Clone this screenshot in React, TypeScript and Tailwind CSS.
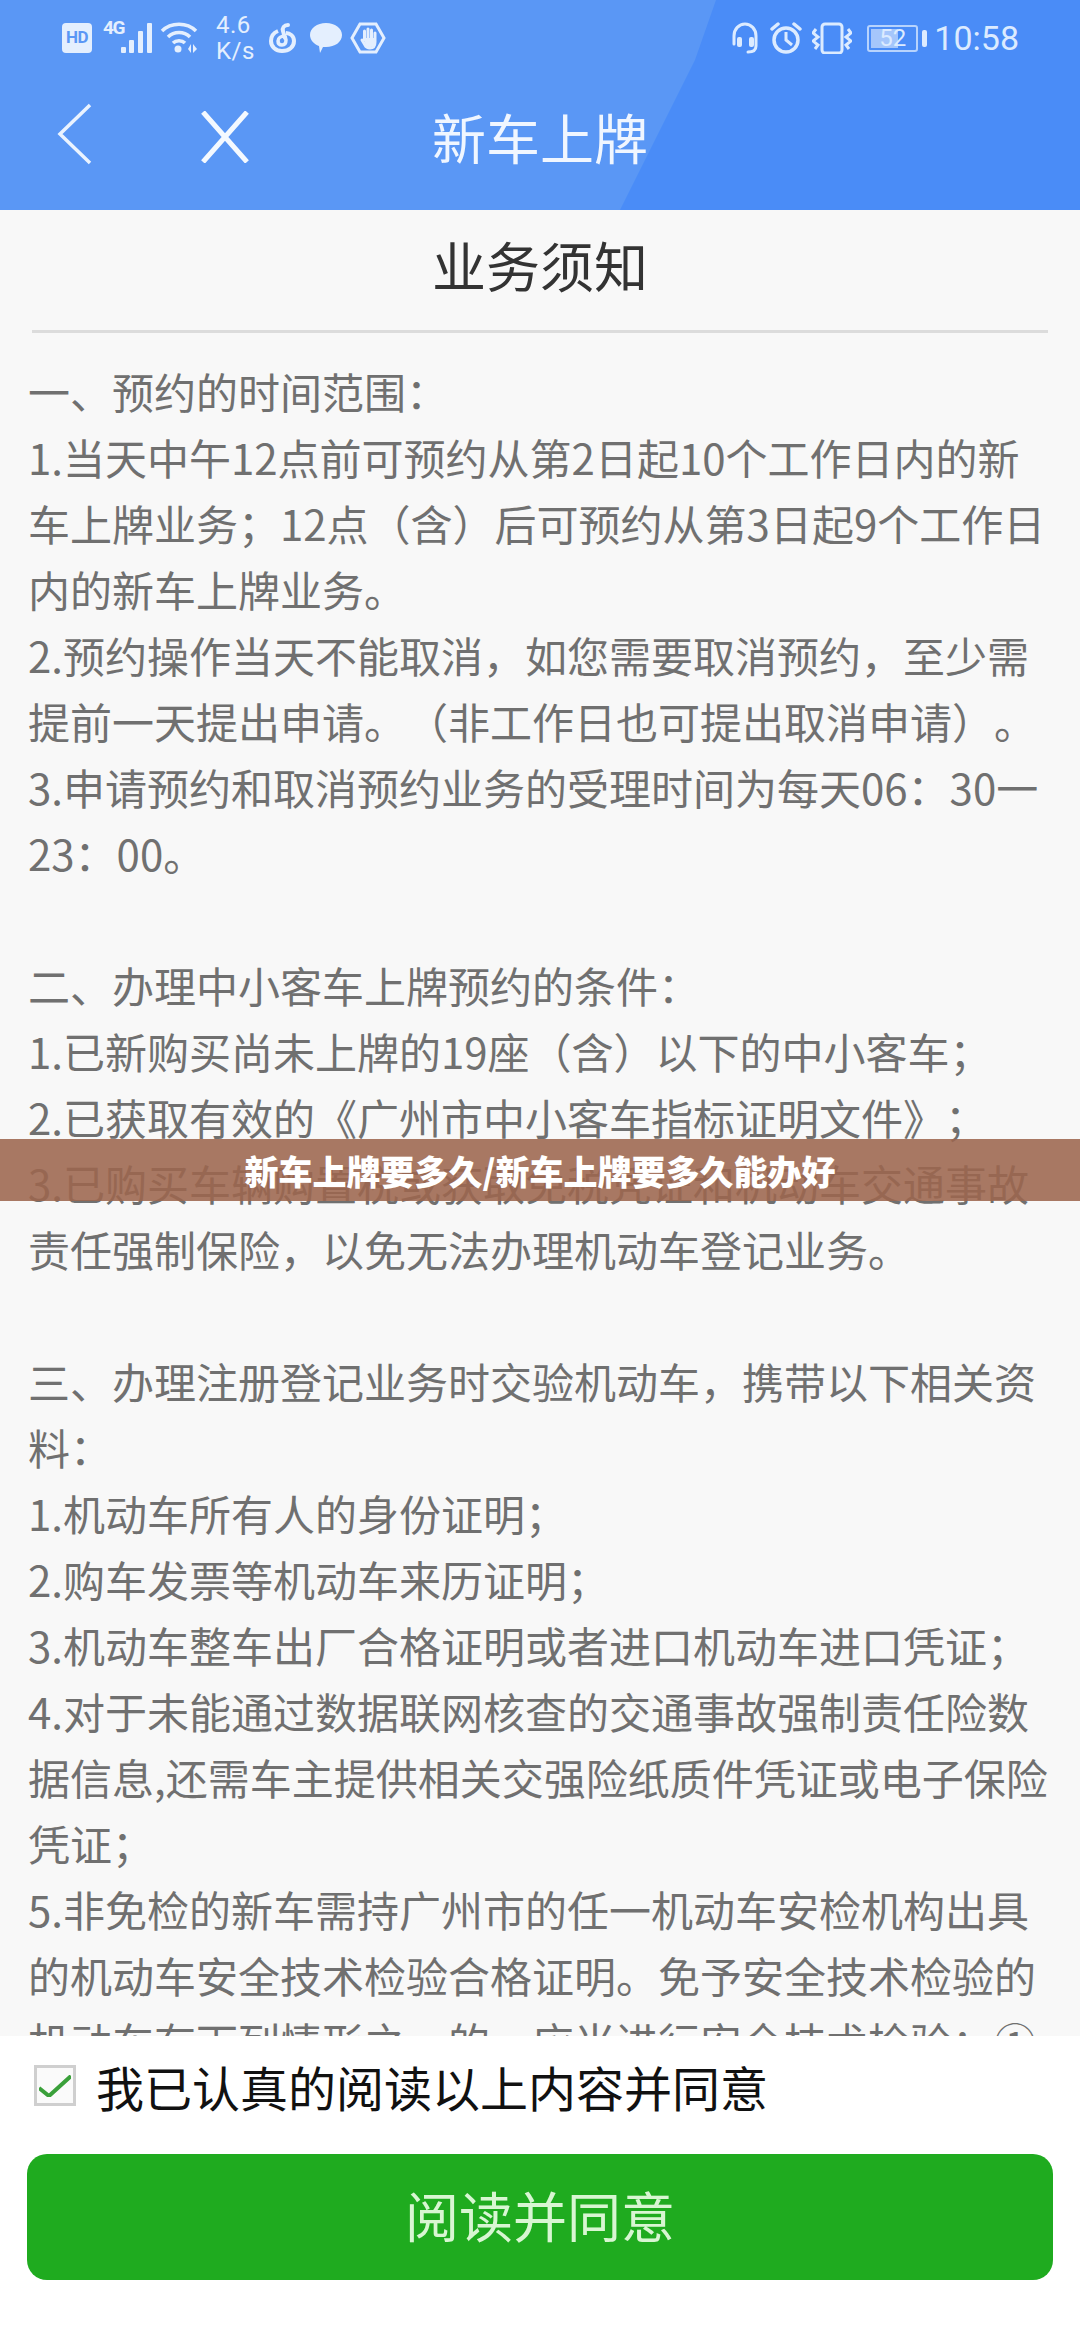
const lines = [
  '一、预约的时间范围：',
  '1.当天中午12点前可预约从第2日起10个工作日内的新',
  '车上牌业务；12点（含）后可预约从第3日起9个工作日',
  '内的新车上牌业务。',
  '2.预约操作当天不能取消，如您需要取消预约，至少需',
  '提前一天提出申请。（非工作日也可提出取消申请）。',
  '3.申请预约和取消预约业务的受理时间为每天06：30一',
  '23：00。',
  '',
  '二、办理中小客车上牌预约的条件：',
  '1.已新购买尚未上牌的19座（含）以下的中小客车；',
  '2.已获取有效的《广州市中小客车指标证明文件》；',
  '3.已购买车辆购置税或获取免税凭证和机动车交通事故',
  '责任强制保险，以免无法办理机动车登记业务。',
  '',
  '三、办理注册登记业务时交验机动车，携带以下相关资',
  '料：',
  '1.机动车所有人的身份证明；',
  '2.购车发票等机动车来历证明；',
  '3.机动车整车出厂合格证明或者进口机动车进口凭证；',
  '4.对于未能通过数据联网核查的交通事故强制责任险数',
  '据信息,还需车主提供相关交强险纸质件凭证或电子保险',
  '凭证；',
  '5.非免检的新车需持广州市的任一机动车安检机构出具',
  '的机动车安全技术检验合格证明。免予安全技术检验的',
  '机动车有下列情形之一的，应当进行安全技术检验：①',
];

function StatusLeft() {
  return (
    <div className="flex items-center text-[#e4effe]">
      <div className="flex h-[30px] w-[30px] items-center justify-center rounded-[4px] bg-[#e4effe] font-['Roboto',sans-serif] text-[17px] font-bold tracking-[-0.5px] text-[#5a97f5]">
        HD
      </div>
      <div className="relative ml-[11px] h-[32px] w-[49px]">
        <span className="absolute top-[-4px] left-0 font-['Roboto',sans-serif] text-[19px] leading-[20px] font-bold tracking-[-1.5px]">4G</span>
        <svg viewBox="0 0 32 32" className="absolute top-0 left-[17px] h-[32px] w-[32px]" fill="currentColor">
          <rect x="1" y="25" width="5" height="6" rx="1" />
          <rect x="9" y="18" width="5" height="13" rx="1" />
          <rect x="18" y="9" width="5" height="22" rx="1" />
          <rect x="27" y="1" width="5" height="30" rx="1" />
        </svg>
      </div>
      <svg viewBox="0 0 38 32" className="ml-[8px] h-[32px] w-[38px]" fill="none" stroke="currentColor" strokeWidth="3.5">
        <path d="M2 9 C11 0 27 0 36 9" />
        <path d="M8 15 C14 9 24 9 30 15" />
        <path d="M13 21 C16 18 22 18 25 21" />
        <circle cx="18" cy="27" r="3.5" fill="currentColor" stroke="none" />
        <path d="M28 27 L31 22 V31 Z M33 22 L37 27 L33 31 Z" fill="currentColor" stroke="none" />
      </svg>
      <div className="ml-[18px] w-[34px] text-center font-['Roboto',sans-serif] text-[24px] leading-[26px] tracking-[0.5px]">
        <div>4.6</div>
        <div>K/s</div>
      </div>
      <svg viewBox="0 0 30 30" className="ml-[18px] h-[30px] w-[30px]" fill="none" stroke="currentColor" strokeWidth="4">
        <path d="M20 2 C16 2 14 5 15 8 L17 15" strokeLinecap="round" />
        <path d="M10 8 C5 10 3 14 3 18 C3 24 8 28 14 28 C21 28 26 24 26 18 C26 13 22 10 18 10" />
        <path d="M17 13 C13 13 10 15 10 18 C10 21 12 22 14 22 C17 22 18 20 18 17 L17 13" strokeWidth="3.5" />
      </svg>
      <svg viewBox="0 0 32 32" className="ml-[12px] h-[32px] w-[32px]" fill="currentColor">
        <path d="M16 1 C25 1 32 6 32 13 C32 20 25 25 16 25 L13 25 L10 31 L9 24 C4 22 0 18 0 13 C0 6 7 1 16 1 Z" />
      </svg>
      <svg viewBox="0 0 36 32" className="ml-[8px] h-[32px] w-[36px]" fill="none" stroke="currentColor" strokeWidth="3">
        <path d="M10 2 H26 L34 16 L26 30 H10 L2 16 Z" />
        <path d="M12 18 L15 23 C16 25 18 26 20 26 C24 26 25 23 25 20 V11 M21.5 18 V8 M18 18 V7 M14.5 18 V9" strokeLinecap="round" />
        <path d="M15 16 H25 V22 C25 24 22 25 20 25 C17 25 15 23 15 20 Z" fill="currentColor" stroke="none" />
      </svg>
    </div>
  );
}

function StatusRight() {
  return (
    <div className="flex items-center text-[#dcebff]">
      <svg viewBox="0 0 28 32" className="h-[32px] w-[28px]" fill="none" stroke="currentColor" strokeWidth="3">
        <path d="M3 22 V14 C3 7 8 2 14 2 C20 2 25 7 25 14 V24 C25 28 22 30 17 30" strokeLinecap="round" />
        <rect x="6" y="15" width="5" height="10" rx="2" fill="currentColor" stroke="none" />
        <rect x="18" y="15" width="5" height="10" rx="2" fill="currentColor" stroke="none" />
      </svg>
      <svg viewBox="0 0 32 32" className="ml-[11px] h-[32px] w-[32px]" fill="none" stroke="currentColor" strokeWidth="3.5">
        <circle cx="16" cy="18" r="12" />
        <path d="M16 10 V18 L22 23" strokeWidth="3" />
        <path d="M2 7 L8 2 M30 7 L24 2" strokeLinecap="round" />
      </svg>
      <svg viewBox="0 0 40 32" className="ml-[10px] h-[32px] w-[40px]" fill="none" stroke="currentColor" strokeWidth="3">
        <rect x="10" y="2" width="20" height="29" rx="3" />
        <path d="M4 7 L1 11 L6 15 L1 19 L6 23 L3 27" />
        <path d="M36 7 L39 11 L34 15 L39 19 L34 23 L37 27" />
      </svg>
      <div className="relative ml-[15px] flex h-[27px] w-[51px] items-center justify-center overflow-hidden rounded-[3px] border-2 border-[#b7d3fd] font-['Roboto',sans-serif] text-[24px] leading-none">
        <div className="absolute inset-y-[2px] left-[2px] w-[27px] bg-[#a5c6fb]" />
        <span className="relative">52</span>
      </div>
      <div className="ml-[4px] h-[17px] w-[5px] rounded-[2px] bg-[#dcebff]" />
      <div className="ml-[7px] font-['Roboto',sans-serif] text-[34px] leading-none">10:58</div>
    </div>
  );
}

export default function App() {
  return (
    <div className="relative flex h-[2340px] w-[1080px] flex-col overflow-hidden bg-[#f8f8f8] font-['Noto_Sans_CJK_SC',sans-serif] [text-spacing-trim:space-all]">
      <header className="relative h-[210px] shrink-0 bg-[#4a8cf7]">
        {/* lighter diagonal part of the bar */}
        <div className="absolute inset-0 bg-[#5a97f5] [clip-path:polygon(0_0,716px_0,695px_60px,665px_120px,640px_170px,620px_210px,0_210px)]" />
        <div className="relative flex h-[76px] items-center justify-between pr-[61px] pl-[62px]">
          <StatusLeft />
          <StatusRight />
        </div>
        <div className="relative flex h-[134px] items-start">
          <svg viewBox="0 0 36 62" className="mt-[27px] ml-[57px] h-[62px] w-[36px]" fill="none" stroke="#eaf3ff" strokeWidth="3.5">
            <path d="M33 2 L3 31 L33 60" />
          </svg>
          <svg viewBox="0 0 50 52" className="mt-[35px] ml-[107px] h-[52px] w-[50px]" fill="none" stroke="#f4f9ff" strokeWidth="5">
            <path d="M3 1 L47 51 M47 1 L3 51" />
          </svg>
          <h1 className="absolute inset-x-0 top-[25px] text-center text-[54px] leading-[72px] font-normal text-[#f0f6ff]">新车上牌</h1>
        </div>
      </header>

      <main className="min-h-0 flex-1 overflow-hidden">
        <h2 className="pt-[17px] text-center text-[54px] leading-[76px] font-normal text-[#333333]">业务须知</h2>
        <div className="mx-[32px] mt-[27px] h-[3px] bg-[#dcdcdc]" />
        <div className="mt-[25px] pl-[28px] text-[42px] leading-[66px] whitespace-nowrap text-[#707070]">
          {lines.map((line, i) => (
            <div key={i} className="h-[66px]">
              {line}
            </div>
          ))}
        </div>
      </main>

      <footer className="relative h-[304px] shrink-0 bg-white">
        <div className="flex h-[104px] items-center pb-[5px] pl-[34px]">
          <div className="flex h-[41px] w-[42px] items-center justify-center border-[3px] border-[#cfcfcf] bg-[#fafafa]">
            <svg viewBox="0 0 32 22" className="h-[22px] w-[32px]" fill="none" stroke="#3aa03a" strokeWidth="4">
              <path d="M0 13 L10 21 L32 1" />
            </svg>
          </div>
          <span className="ml-[20px] text-[48px] leading-[64px] text-[#111111]">我已认真的阅读以上内容并同意</span>
        </div>
        <button className="mx-[27px] mt-[14px] flex h-[126px] w-[1026px] items-center justify-center rounded-[20px] bg-[#1fab1f] pb-[6px] text-[54px] text-[#d8f6d2]">
          阅读并同意
        </button>
      </footer>

      <div className="absolute inset-x-0 top-[1139px] flex h-[62px] items-center justify-center bg-[#9c654d]/[0.88] text-[34px] font-black text-white">
        新车上牌要多久/新车上牌要多久能办好
      </div>
    </div>
  );
}
